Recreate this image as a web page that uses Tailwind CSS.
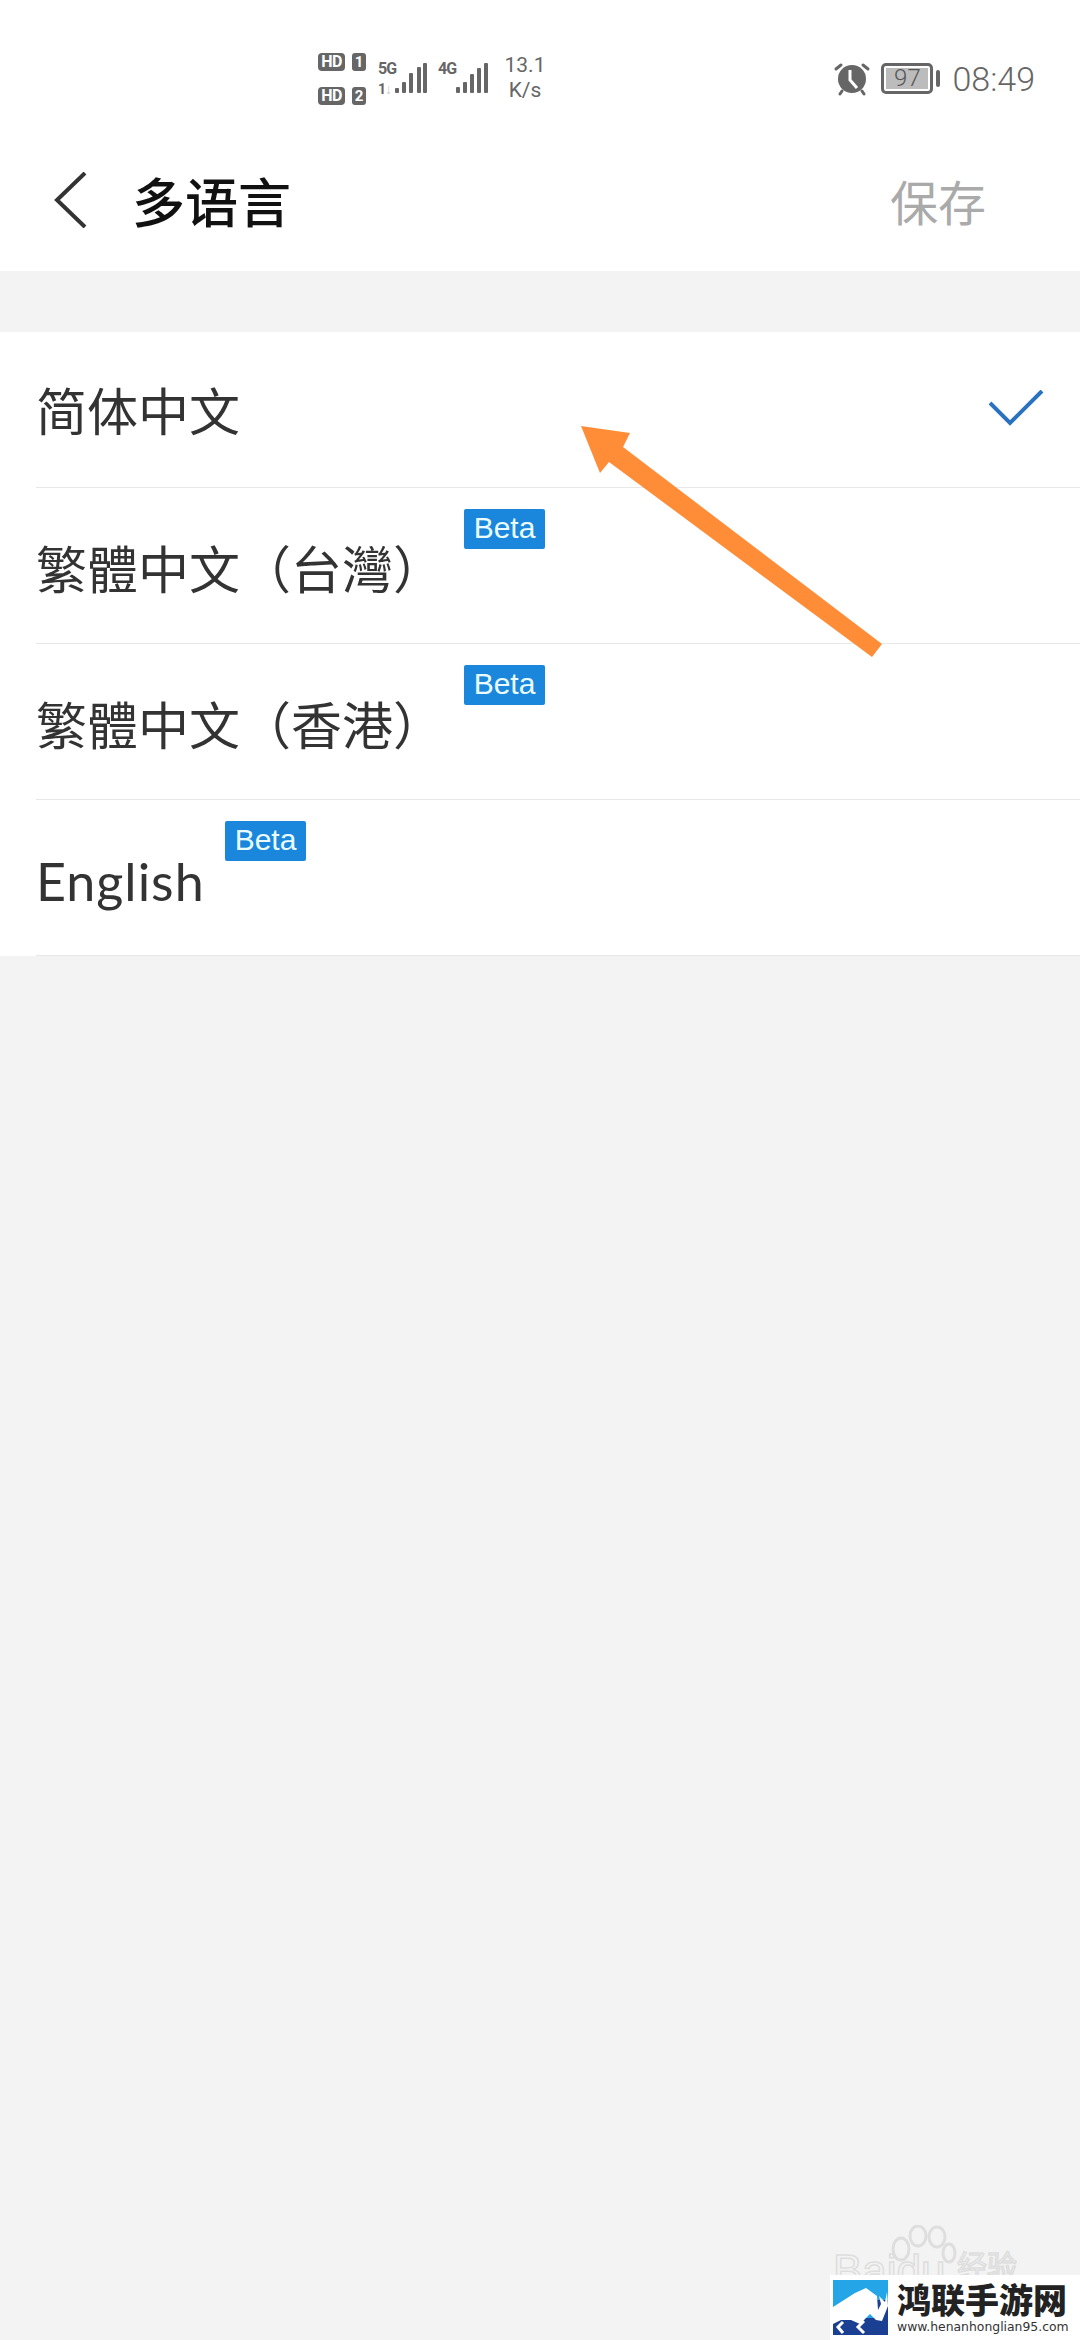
<!DOCTYPE html>
<html lang="zh-CN">
<head>
    <meta charset="UTF-8">
    <meta name="viewport" content="width=device-width, initial-scale=1.0">
    <title>多语言</title>
    <script src="https://cdn.jsdelivr.net/npm/@tailwindcss/browser@4"></script>
</head>
<body class="bg-[#f3f3f3]">
<div class="relative w-[1080px] h-[2340px] overflow-hidden bg-[#f3f3f3] font-['Noto_Sans_CJK_SC','Noto_Sans',sans-serif]">

    <!-- Header -->
    <div class="bg-white h-[271px] flex flex-col">
        <!-- Status bar -->
        <div class="h-[150px] flex items-start pt-[53px] pl-[318px] pr-[45px] text-[#666] font-['Roboto',sans-serif]">
            <div class="flex flex-col gap-[16px] w-[60px]">
                <div class="flex gap-[7px]">
                    <span class="w-[27px] h-[18px] rounded-[4px] bg-[#666] text-white text-[16px] leading-[18px] font-bold text-center tracking-[-0.5px]">HD</span>
                    <span class="w-[14px] h-[18px] rounded-[3px] bg-[#666] text-white text-[15px] leading-[18px] font-bold text-center">1</span>
                </div>
                <div class="flex gap-[7px]">
                    <span class="w-[27px] h-[18px] rounded-[4px] bg-[#666] text-white text-[16px] leading-[18px] font-bold text-center tracking-[-0.5px]">HD</span>
                    <span class="w-[14px] h-[18px] rounded-[3px] bg-[#666] text-white text-[15px] leading-[18px] font-bold text-center">2</span>
                </div>
            </div>
            <div class="w-[17px] pt-[9px] flex flex-col">
                <span class="text-[16px] leading-[14px] font-bold tracking-[-1px]">5G</span>
                <span class="text-[14px] leading-[12px] font-bold mt-[7px] tracking-[-1px]">1<span class="text-[#ccc]">↓</span></span>
            </div>
            <svg class="mt-[10px]" width="36" height="30" viewBox="0 0 36 30" fill="#666">
                <rect x="0" y="25" width="4" height="5" rx="1"/>
                <rect x="7" y="19" width="4" height="11" rx="1"/>
                <rect x="14" y="10" width="4" height="20" rx="1"/>
                <rect x="22" y="4" width="4" height="26" rx="1"/>
                <rect x="28" y="0" width="4" height="30" rx="1"/>
            </svg>
            <div class="w-[18px] ml-[7px] pt-[9px] text-[16px] leading-[14px] font-bold tracking-[-1px]">4G</div>
            <svg class="mt-[10px]" width="36" height="30" viewBox="0 0 36 30" fill="#666">
                <rect x="0" y="24" width="4" height="6" rx="1"/>
                <rect x="7" y="19" width="4" height="11" rx="1"/>
                <rect x="14" y="11" width="4" height="19" rx="1"/>
                <rect x="21" y="5" width="4" height="25" rx="1"/>
                <rect x="28" y="0" width="4" height="30" rx="1"/>
            </svg>
            <div class="ml-[11px] w-[44px] text-[21px] leading-[25px] text-center">13.1<br>K/s</div>

            <svg class="ml-auto mt-[9px]" width="38" height="34" viewBox="0 0 38 34">
                <circle cx="19" cy="17" r="14" fill="#666"/>
                <path d="M3 7 L8 3 M35 7 L30 3" stroke="#666" stroke-width="3" stroke-linecap="round"/>
                <path d="M9 29 L7 32 M29 29 L31 32" stroke="#666" stroke-width="3" stroke-linecap="round"/>
                <path d="M17 8 V18 L24 26" stroke="#fff" stroke-width="3" fill="none"/>
            </svg>
            <div class="ml-[10px] mt-[10px] w-[52px] h-[31px] border-[3px] border-[#666] rounded-[5px] p-[2px]">
                <div class="h-full bg-[#bcbcbc] text-[#555] text-[24px] leading-[21px] text-center font-light">97</div>
            </div>
            <div class="ml-[3px] mt-[17px] w-[4px] h-[17px] rounded-[2px] bg-[#666]"></div>
            <div class="ml-[12px] mt-[4px] text-[34px] leading-[44px] font-light">08:49</div>
        </div>

        <!-- Nav -->
        <div class="flex items-center h-[100px] pl-[53px] pr-[94px]">
            <svg width="34" height="56" viewBox="0 0 34 56" fill="none" stroke="#333" stroke-width="4">
                <path d="M32 1 L4 28 L32 55"/>
            </svg>
            <h1 class="ml-[45px] text-[53px] font-medium text-[#111] leading-none">多语言</h1>
            <span class="ml-auto text-[48px] text-[#aaa] leading-none">保存</span>
        </div>
    </div>

    <!-- Language list -->
    <div class="mt-[61px] bg-white text-[51px] text-[#333]">
        <div class="ml-[36px] h-[156px] flex items-center justify-between border-b border-[#e8e8e8]">
            <span>简体中文</span>
            <svg class="mr-[36px] mb-[4px]" width="55" height="36" viewBox="0 0 55 36" fill="none" stroke="#2a72c0" stroke-width="4">
                <path d="M1 13 L21 33 L53 1"/>
            </svg>
        </div>
        <div class="relative ml-[36px] h-[156px] flex items-center border-b border-[#e8e8e8]">
            <span class="mt-[4px]">繁體中文（台灣）</span>
            <span class="absolute left-[428px] top-[21px] w-[81px] h-[40px] rounded-[2px] bg-[#1a87dc] text-[#eafcff] font-['Liberation_Sans',sans-serif] text-[30px] leading-[38px] text-center">Beta</span>
        </div>
        <div class="relative ml-[36px] h-[156px] flex items-center border-b border-[#e8e8e8]">
            <span class="mt-[4px]">繁體中文（香港）</span>
            <span class="absolute left-[428px] top-[21px] w-[81px] h-[40px] rounded-[2px] bg-[#1a87dc] text-[#eafcff] font-['Liberation_Sans',sans-serif] text-[30px] leading-[38px] text-center">Beta</span>
        </div>
        <div class="relative ml-[36px] h-[156px] flex items-center border-b border-[#e8e8e8]">
            <span class="mt-[6px] font-['Lato',sans-serif] text-[52px] tracking-[1px]">English</span>
            <span class="absolute left-[189px] top-[21px] w-[81px] h-[40px] rounded-[2px] bg-[#1a87dc] text-[#eafcff] font-['Liberation_Sans',sans-serif] text-[30px] leading-[38px] text-center">Beta</span>
        </div>
    </div>

    <!-- Orange annotation arrow -->
    <svg class="absolute left-0 top-0 pointer-events-none" width="1080" height="700" viewBox="0 0 1080 700">
        <polygon fill="#ff8c37" points="581,426 630,433 623,447 882,644 872,657 609,462 600,473"/>
    </svg>

    <!-- Baidu watermark -->
    <div class="absolute left-[833px] top-[2246px] h-[29px] overflow-hidden text-transparent [-webkit-text-stroke:1.5px_#dedede] text-[44px] leading-[50px] font-['Liberation_Sans',sans-serif]">Baidu</div>
    <svg class="absolute left-[885px] top-[2225px]" width="72" height="50" viewBox="0 0 72 50" fill="#f3f3f3" stroke="#dedede" stroke-width="3">
        <ellipse cx="16" cy="24" rx="8" ry="11"/>
        <ellipse cx="33" cy="11" rx="8" ry="10"/>
        <ellipse cx="52" cy="12" rx="8" ry="10"/>
        <ellipse cx="64" cy="28" rx="6" ry="9"/>
    </svg>
    <div class="absolute left-[957px] top-[2246px] h-[29px] overflow-hidden text-transparent [-webkit-text-stroke:1.5px_#dedede] text-[30px] leading-[36px]">经验</div>

    <!-- Site watermark -->
    <div class="absolute right-0 bottom-0 w-[250px] h-[65px] bg-white flex items-center pl-[3px]">
        <svg width="55" height="55" viewBox="0 0 55 55">
            <rect width="55" height="55" fill="#23a5e8"/>
            <rect y="38" width="55" height="17" fill="#1b3f93"/>
            <rect x="44" y="20" width="11" height="20" fill="#1b3f93"/>
            <path d="M0 27 L22 13 L33 8 L44 16 L45 30 L48 24 L46 16 L52 22 L54 12 L55 26 L49 41 L43 40 L37 34 L27 44 L18 40 L8 40 L0 44 Z" fill="#fff"/>
            <path d="M10 42 L5 47 L10 53 M31 41 L25 47 L31 53" stroke="#fff" stroke-width="3" fill="none"/>
        </svg>
        <div class="ml-[9px] flex flex-col">
            <span class="text-[34px] leading-[36px] font-black text-[#222]">鸿联手游网</span>
            <span class="text-[12.4px] leading-[14px] mt-[3px] text-[#333] font-['DejaVu_Sans',sans-serif]">www.henanhonglian95.com</span>
        </div>
    </div>
</div>
</body>
</html>
